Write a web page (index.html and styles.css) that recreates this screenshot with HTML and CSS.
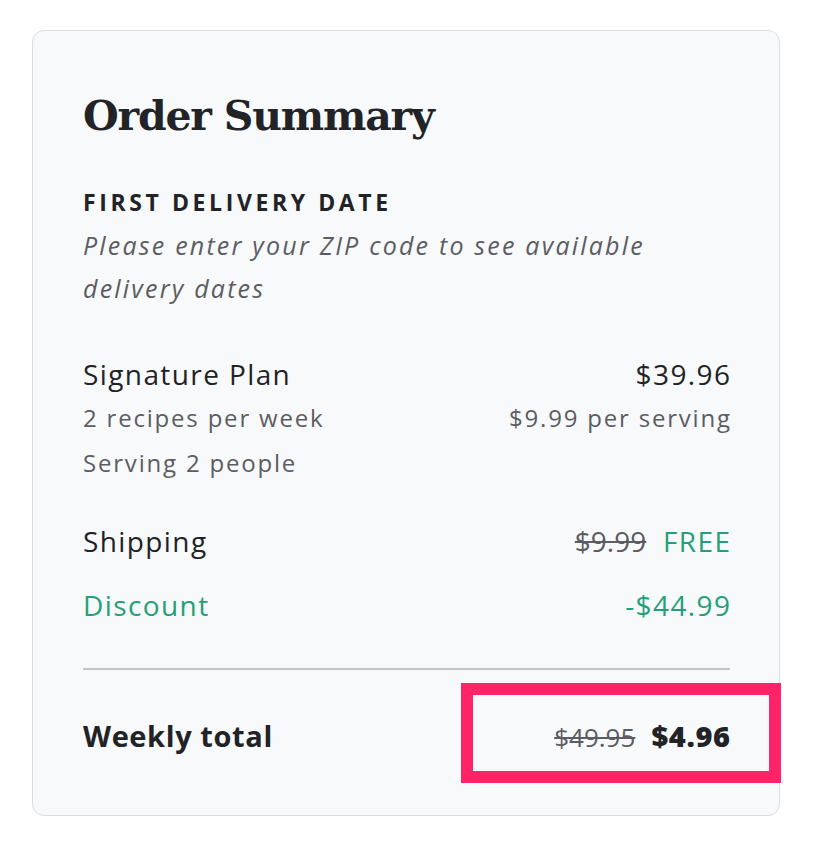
FILE: index.html
```html
<!DOCTYPE html>
<html lang="en">
<head>
<meta charset="utf-8">
<title>Order Summary</title>
<link rel="stylesheet" href="styles.css">
</head>
<body>
<section class="card">
  <h1 class="title">Order Summary</h1>
  <div class="delivery">
    <h2 class="eyebrow">FIRST DELIVERY DATE</h2>
    <p class="note">Please enter your ZIP code to see available delivery dates</p>
  </div>
  <div class="plan">
    <div class="row main">
      <span>Signature Plan</span>
      <span class="end">$39.96</span>
    </div>
    <div class="row sub">
      <span>2 recipes per week</span>
      <span class="end">$9.99 per serving</span>
    </div>
    <div class="row sub">
      <span>Serving 2 people</span>
    </div>
  </div>
  <div class="row main shipping">
    <span>Shipping</span>
    <span class="end"><s class="old">$9.99</s> <span class="green">FREE</span></span>
  </div>
  <div class="row main green discount">
    <span>Discount</span>
    <span class="end">-$44.99</span>
  </div>
  <hr class="divider">
  <div class="row total">
    <span>Weekly total</span>
    <span class="end"><s class="old">$49.95</s> <b>$4.96</b></span>
  </div>
  <div class="highlight"></div>
</section>
</body>
</html>
```
FILE: styles.css
```css
html, body {
  margin: 0;
  padding: 0;
  background: #ffffff;
}
body {
  padding: 30px 0 0 32px;
  font-family: "Open Sans", "Noto Sans", sans-serif;
  color: #222327;
}
.card {
  position: relative;
  box-sizing: border-box;
  width: 748px;
  height: 786px;
  background: #f8f9fb;
  border: 1.5px solid #dcdde1;
  border-radius: 12px;
  padding: 0 49px 0 50px;
}
.title {
  margin: 60px 0 0;
  font-family: "DejaVu Serif", "Liberation Serif", serif;
  font-weight: 700;
  font-size: 41px;
  line-height: 50px;
  letter-spacing: -1.2px;
  color: #222327;
}
.delivery {
  margin-top: 48px;
}
.eyebrow {
  margin: 0;
  font-size: 23px;
  font-weight: 700;
  letter-spacing: 3.6px;
  line-height: 26px;
  color: #222327;
}
.note {
  margin: 9px 0 0;
  font-style: italic;
  font-size: 25px;
  letter-spacing: 2.2px;
  line-height: 43px;
  color: #5c5d63;
}
.plan {
  margin-top: 44px;
}
.row {
  display: flex;
  justify-content: space-between;
  align-items: baseline;
}
.main {
  font-size: 28px;
  line-height: 40px;
  letter-spacing: 1.4px;
  color: #222327;
}
.main .end {
  margin-right: -1.4px;
}
.plan .main {
  margin-bottom: 1px;
}
.sub {
  font-size: 24px;
  line-height: 45px;
  letter-spacing: 1.8px;
  color: #5c5d63;
}
.sub .end {
  margin-right: -1.8px;
}
.shipping {
  margin-top: 36px;
}
.discount {
  margin-top: 24px;
}
.green,
.main.green {
  color: #24a078;
}
.old {
  color: #5c5d63;
  text-decoration-thickness: 2px;
}
.shipping .old {
  letter-spacing: 0;
  margin-right: 8px;
}
.divider {
  margin: 43px 0 0;
  border: 0;
  height: 2px;
  background: #c4c5c9;
}
.total {
  margin-top: 46px;
  font-size: 29px;
  line-height: 40px;
  letter-spacing: 0.6px;
  font-weight: 700;
}
.total .end {
  margin-right: -0.6px;
}
.total .old {
  font-weight: 400;
  font-size: 26px;
  letter-spacing: 0;
  margin-right: 8px;
}
.highlight {
  position: absolute;
  left: 428px;
  top: 652px;
  width: 320px;
  height: 100px;
  box-sizing: border-box;
  border: 12px solid #ff2367;
}
```
